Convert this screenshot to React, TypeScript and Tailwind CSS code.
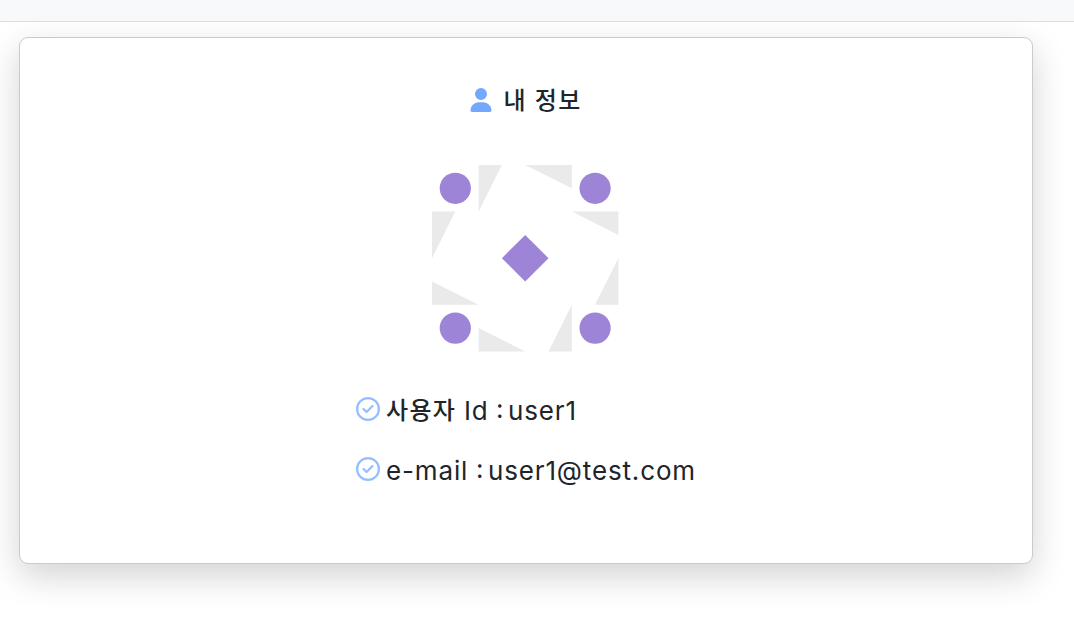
import { FaRegCircleCheck, FaUser } from "react-icons/fa6";

type InfoRowProps = {
  label: React.ReactNode;
  value: string;
};

const user = {
  id: "user1",
  email: "user1@test.com",
};

export default function App() {
  return (
    <div className="min-h-screen overflow-hidden bg-white font-['Inter','Noto_Sans_CJK_KR',sans-serif] text-[#212529]">
      <header className="h-[22px] border-b border-[#dedfe0] bg-[#f8f9fb]" />
      <main className="pt-[15px] pl-[19px]">
        <section className="flex h-[527px] w-[1014px] flex-col items-center rounded-[9px] border border-[#cbcbcb] bg-white shadow-[0_12px_34px_rgba(0,0,0,0.175)]">
          <h1 className="mt-[46px] flex h-8 items-center gap-[11px] text-[24px] leading-8">
            <FaUser className="h-6 w-[22px] text-[#74a7fe]" />
            <span className="mt-[2px] font-medium tracking-[1.4px]">내 정보</span>
          </h1>
          <Identicon />
          <div className="mt-[39.6px] w-[340px] space-y-5">
            <InfoRow
              label={
                <>
                  <span className="w-[78px] text-[24px] font-medium tracking-[1.3px]">사용자</span>
                  <span className="w-8">Id</span>
                </>
              }
              value={user.id}
            />
            <InfoRow label={<span className="w-[90px]">e-mail</span>} value={user.email} />
          </div>
        </section>
      </main>
    </div>
  );
}

function InfoRow({ label, value }: InfoRowProps) {
  return (
    <p className="flex h-10 items-center text-[26px] leading-10 tracking-[0.85px] whitespace-nowrap">
      <FaRegCircleCheck className="mr-[6px] mb-1 size-6 shrink-0 text-[#94beff]" />
      {label}
      <span className="mb-[5px] w-[12px]">:</span>
      <span>{value}</span>
    </p>
  );
}

function Identicon() {
  return (
    <svg viewBox="0 0 8 8" className="mt-[49.4px] mr-[1.2px] size-[186.4px] shrink-0" aria-hidden="true">
      <g fill="#eaeaea">
        <path d="M2 0h1L2 2zM4 0h2v1z" />
        <path d="M6 2h2v1zM8 4v2H7z" />
        <path d="M6 6v2H5zM4 8H2V7z" />
        <path d="M2 6H0V5zM0 4V2h1z" />
      </g>
      <g fill="#9d84d7">
        <circle cx="1" cy="1" r=".67" />
        <circle cx="7" cy="1" r=".67" />
        <circle cx="1" cy="7" r=".67" />
        <circle cx="7" cy="7" r=".67" />
        <path d="M4 3l1 1-1 1-1-1z" />
      </g>
    </svg>
  );
}
